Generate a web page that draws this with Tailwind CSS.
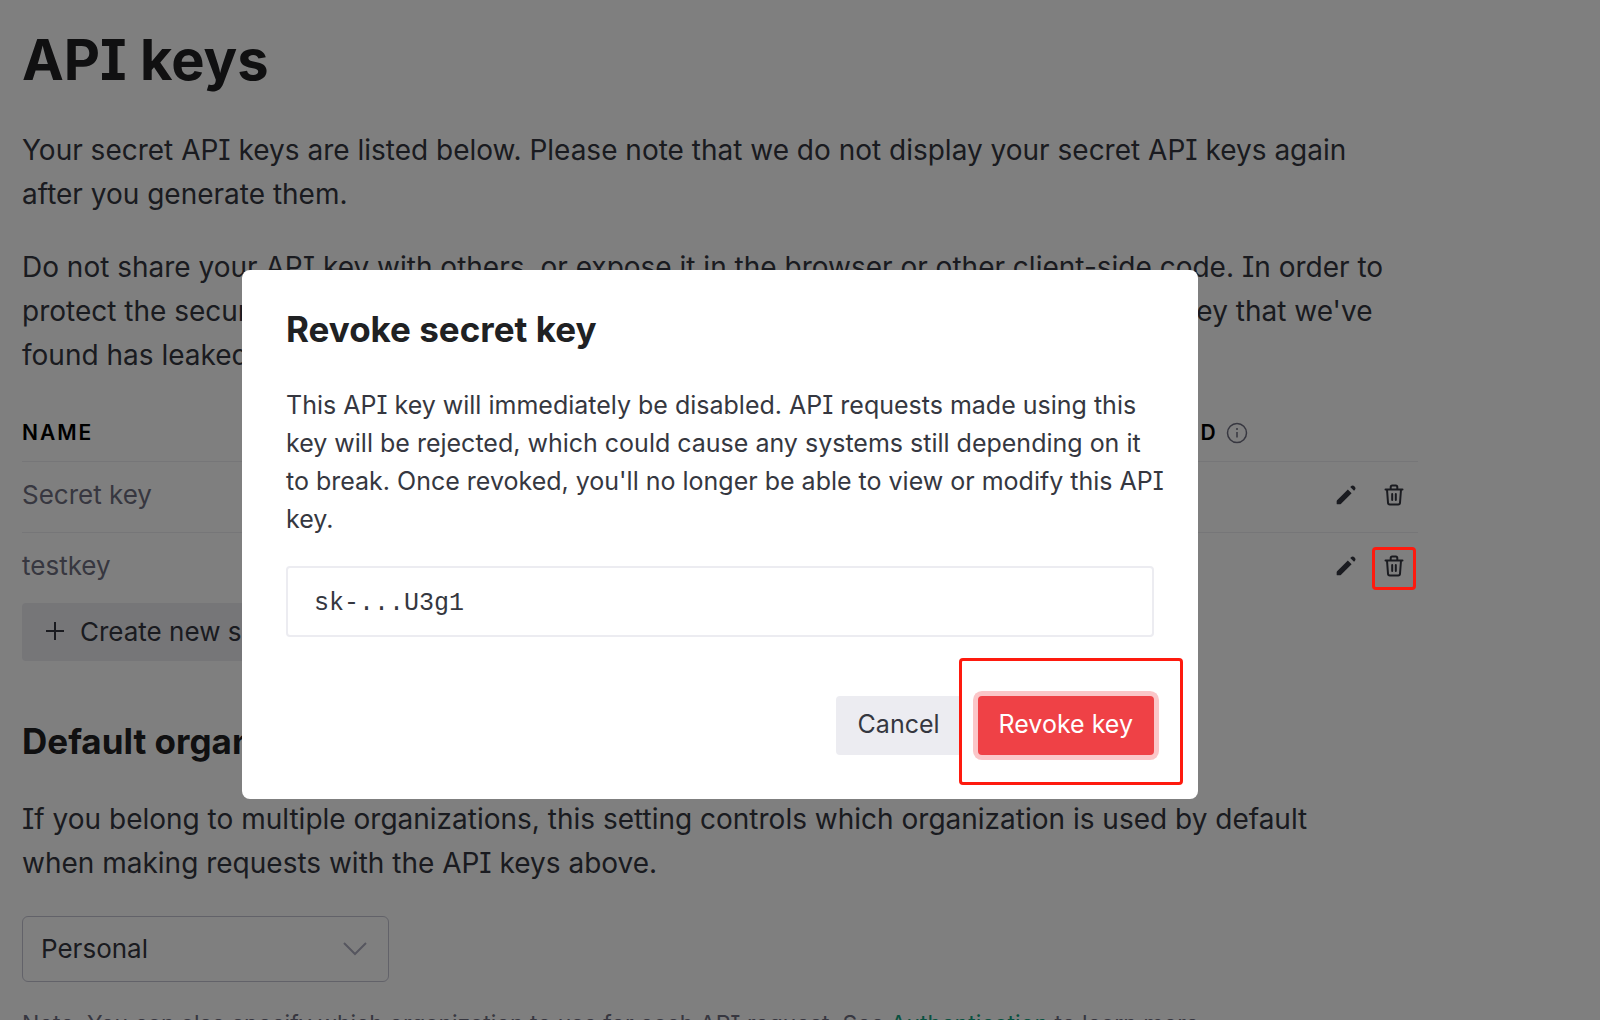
<!DOCTYPE html>
<html lang="en">
<head>
<meta charset="utf-8">
<meta name="viewport" content="width=device-width, initial-scale=1">
<title>API keys</title>
<script src="https://cdn.jsdelivr.net/npm/@tailwindcss/browser@4"></script>
</head>
<body class="h-screen overflow-hidden bg-white font-['Inter',sans-serif] text-[#353740] [font-feature-settings:'cv08']">

<svg class="hidden" aria-hidden="true">
  <symbol id="pencil" viewBox="1 1 18 18">
    <path fill="currentColor" d="M13.586 3.586a2 2 0 1 1 2.828 2.828l-.4.4-2.828-2.828.4-.4ZM11.379 5.793 3.300 13.872Q3 14.172 3 14.600V16.500Q3 17 3.500 17H5.400Q5.828 17 6.128 16.700l8.080-8.079-2.830-2.828Z"/>
  </symbol>
  <symbol id="trash" viewBox="0 0 24 24">
    <path fill="none" stroke="currentColor" stroke-width="2" stroke-linecap="round" stroke-linejoin="round" d="M3.500 6.500h17M5 6.500l1 13.300a1.800 1.800 0 0 0 1.800 1.700h8.400a1.800 1.800 0 0 0 1.800-1.700l1-13.300M8.700 6V4a1.500 1.500 0 0 1 1.500-1.500h3.600a1.500 1.500 0 0 1 1.500 1.500v2M10.200 11v6M13.800 11v6"/>
  </symbol>
</svg>

<main class="w-[90%] px-[22px] pt-6">
  <h1 class="text-[56px] leading-[72px] font-bold text-[#202123]">API keys</h1>
  <p class="mt-8 pr-[34px] text-[28px] leading-[44px]">Your secret API keys are listed below. Please note that we do not display your secret API keys again after you generate them.</p>
  <p class="mt-[29px] pr-[34px] text-[28px] leading-[44px]">Do not share your API key with others, or expose it in the browser or other client-side code. In order to protect the security of your account, OpenAI may also automatically rotate out any API key that we've found has leaked publicly.</p>

  <table class="mt-7 w-full text-left text-[26px]">
    <thead>
      <tr class="h-14 border-b border-[#ececf1] text-[21px] tracking-[2px] text-black">
        <th class="w-[28%] p-0 font-semibold">NAME</th>
        <th class="w-[24%] p-0 font-semibold">KEY</th>
        <th class="w-[24%] p-0 font-semibold">CREATED</th>
        <th class="p-0 font-semibold">
          <span class="flex items-center gap-2">LAST USED
            <svg class="size-[22px] text-[#6e6e80]" viewBox="0 0 22 22" fill="none" stroke="currentColor" stroke-width="1.500"><circle cx="11" cy="11" r="9.500"/><path d="M11 10v5.500M11 6v2"/></svg>
          </span>
        </th>
        <th class="w-[118px] p-0"></th>
      </tr>
    </thead>
    <tbody>
      <tr class="h-[71px] border-b border-[#ececf1] text-[#6e6e80]">
        <td class="pb-1">Secret key</td><td class="pb-1">sk-...9aTq</td><td class="pb-1">Mar 2, 2023</td><td class="pb-1">Never</td>
        <td class="pb-1">
          <div class="flex justify-end gap-6 pr-3 text-[#353740]">
            <button type="button" aria-label="Edit Secret key"><svg class="size-6"><use href="#pencil"/></svg></button>
            <button type="button" aria-label="Revoke Secret key"><svg class="size-6"><use href="#trash"/></svg></button>
          </div>
        </td>
      </tr>
      <tr class="h-[71px] text-[#6e6e80]">
        <td class="pb-1">testkey</td><td class="pb-1">sk-...U3g1</td><td class="pb-1">Mar 9, 2023</td><td class="pb-1">Never</td>
        <td class="pb-1">
          <div class="flex justify-end gap-6 pr-3 text-[#353740]">
            <button type="button" aria-label="Edit testkey"><svg class="size-6"><use href="#pencil"/></svg></button>
            <button type="button" aria-label="Revoke testkey" class="relative"><svg class="size-6"><use href="#trash"/></svg>
              <span class="pointer-events-none absolute -inset-x-[10px] -top-[7px] -bottom-[12px] z-20 rounded-sm border-[3px] border-[#fe1a0e]"></span>
            </button>
          </div>
        </td>
      </tr>
    </tbody>
  </table>

  <button type="button" class="flex h-[58px] items-center gap-4 rounded bg-[#ececf1] px-6 pb-[2px] text-[26px]">
    <svg class="size-[18px]" viewBox="0 0 18 18" fill="none" stroke="currentColor" stroke-width="2"><path d="M9 0v18M0 9h18"/></svg>
    Create new secret key
  </button>

  <h2 class="mt-14 text-[35px] leading-[48px] font-bold text-[#202123]">Default organization</h2>
  <p class="mt-8 pr-[34px] text-[28px] leading-[44px]">If you belong to multiple organizations, this setting controls which organization is used by default when making requests with the API keys above.</p>

  <div class="relative mt-[31px] w-[367px]">
    <select aria-label="Default organization" class="h-[66px] w-full appearance-none rounded-md border border-[#c5c5d2] bg-white px-[18px] pb-[2px] text-[26px]">
      <option>Personal</option>
    </select>
    <svg class="pointer-events-none absolute top-1/2 right-5 h-6 w-7 -translate-y-1/2 text-[#acacbe]" viewBox="0 0 28 24" fill="none" stroke="currentColor" stroke-width="2"><path d="M3 6l11 11L25 6"/></svg>
  </div>
  <p class="mt-6 text-[23px] leading-9 text-[#6e6e80]">Note: You can also specify which organization to use for each API request. See <a href="#" class="text-[#10a37f]">Authentication</a> to learn more.</p>
</main>

<div class="fixed inset-0 z-10 bg-black/50">
  <div class="flex h-full w-[90%] items-center justify-center pt-12">
    <div role="dialog" aria-modal="true" aria-labelledby="revoke-title" class="w-[956px] rounded-lg bg-white p-11">
      <h2 id="revoke-title" class="-mt-2 text-[35px] leading-[46px] font-bold text-[#202123]">Revoke secret key</h2>
      <p class="mt-[34px] -mr-3 text-[25px] leading-[38px]">This API key will immediately be disabled. API requests made using this key will be rejected, which could cause any systems still depending on it to break. Once revoked, you'll no longer be able to view or modify this API key.</p>
      <input type="text" readonly aria-label="Secret key" value="sk-...U3g1" class="mt-7 h-[71px] w-full rounded border-2 border-[#ececf1] px-[26px] pt-1 font-['Liberation_Mono',monospace] text-[25px]">
      <div class="mt-[59px] flex justify-end gap-4">
        <button type="button" class="h-[59px] rounded bg-[#ececf1] px-[22px] text-[25px]">Cancel</button>
        <button type="button" class="relative h-[59px] rounded bg-[#ef4146] px-[21px] text-[25px] text-white ring-[5px] ring-[#fbc6c8]">Revoke key
          <span class="pointer-events-none absolute -top-[38px] -right-[29px] -bottom-[30px] -left-[19px] rounded-sm border-[3px] border-[#fe1a0e]"></span>
        </button>
      </div>
    </div>
  </div>
</div>
</body>
</html>
